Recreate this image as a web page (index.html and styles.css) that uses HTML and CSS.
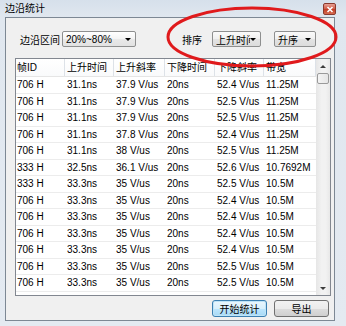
FILE: index.html
```html
<!DOCTYPE html>
<html>
<head>
<meta charset="utf-8">
<link rel="stylesheet" href="styles.css">
</head>
<body>
<div class="window">
  <div class="titlebar">
    <span class="title">边沿统计</span>
    <span class="close"><svg width="8" height="7" viewBox="0 0 8 7"><path d="M1.5 1 L6.5 6 M6.5 1 L1.5 6" stroke="#fff" stroke-width="1.6"/></svg></span>
  </div>
  <div class="client">
    <div class="controls">
      <span class="lbl lbl-range">边沿区间</span>
      <div class="combo combo-range"><span class="ctext">20%~80%</span><i class="arrow"></i></div>
      <span class="lbl lbl-sort">排序</span>
      <div class="combo combo-key"><span class="ctext">上升时间</span><i class="arrow"></i></div>
      <div class="combo combo-order"><span class="ctext">升序</span><i class="arrow"></i></div>
    </div>
    <div class="list">
      <div class="grid">
        <div class="head">
          <span>帧ID</span><span>上升时间</span><span>上升斜率</span><span>下降时间</span><span>下降斜率</span><span>带宽</span>
        </div>
        <div class="row"><span>706 H</span><span>31.1ns</span><span>37.9 V/us</span><span>20ns</span><span>52.4 V/us</span><span>11.25M</span></div>
        <div class="row"><span>706 H</span><span>31.1ns</span><span>37.9 V/us</span><span>20ns</span><span>52.5 V/us</span><span>11.25M</span></div>
        <div class="row"><span>706 H</span><span>31.1ns</span><span>37.9 V/us</span><span>20ns</span><span>52.5 V/us</span><span>11.25M</span></div>
        <div class="row"><span>706 H</span><span>31.1ns</span><span>37.8 V/us</span><span>20ns</span><span>52.4 V/us</span><span>11.25M</span></div>
        <div class="row"><span>706 H</span><span>31.1ns</span><span>38 V/us</span><span>20ns</span><span>52.5 V/us</span><span>11.25M</span></div>
        <div class="row"><span>333 H</span><span>32.5ns</span><span>36.1 V/us</span><span>20ns</span><span>52.6 V/us</span><span>10.7692M</span></div>
        <div class="row"><span>333 H</span><span>33.3ns</span><span>35 V/us</span><span>20ns</span><span>52.5 V/us</span><span>10.5M</span></div>
        <div class="row"><span>706 H</span><span>33.3ns</span><span>35 V/us</span><span>20ns</span><span>52.4 V/us</span><span>10.5M</span></div>
        <div class="row"><span>706 H</span><span>33.3ns</span><span>35 V/us</span><span>20ns</span><span>52.4 V/us</span><span>10.5M</span></div>
        <div class="row"><span>706 H</span><span>33.3ns</span><span>35 V/us</span><span>20ns</span><span>52.4 V/us</span><span>10.5M</span></div>
        <div class="row"><span>706 H</span><span>33.3ns</span><span>35 V/us</span><span>20ns</span><span>52.4 V/us</span><span>10.5M</span></div>
        <div class="row"><span>706 H</span><span>33.3ns</span><span>35 V/us</span><span>20ns</span><span>52.5 V/us</span><span>10.5M</span></div>
        <div class="row"><span>706 H</span><span>33.3ns</span><span>35 V/us</span><span>20ns</span><span>52.5 V/us</span><span>10.5M</span></div>
      </div>
      <div class="scroll">
        <div class="sbtn"><i class="up"></i></div>
        <div class="thumb"></div>
        <div class="track"></div>
        <div class="sbtn"><i class="down"></i></div>
      </div>
    </div>
    <div class="buttons">
      <button class="btn primary">开始统计</button>
      <button class="btn">导出</button>
    </div>
  </div>
  <svg class="mark" width="346" height="326" viewBox="0 0 346 326">
    <ellipse cx="252" cy="37" rx="84" ry="29" fill="none" stroke="#e01a1c" stroke-width="3"/>
  </svg>
</div>
</body>
</html>
```
FILE: styles.css
```css
* { box-sizing: border-box; }
html, body { margin: 0; padding: 0; }
body {
  font: 10px "Liberation Sans", "Noto Sans CJK SC", sans-serif;
  color: #000;
  background: #e2e8ef;
}
.window {
  position: relative;
  width: 346px;
  height: 326px;
  overflow: hidden;
  background: linear-gradient(180deg, #d6e0eb 0, #e0e7ef 17px, #e4eaf1 100%);
}
.titlebar {
  position: relative;
  height: 17px;
  display: flex;
  align-items: center;
  padding-left: 5px;
}
.title { font-size: 10px; line-height: 17px; }
.close {
  position: absolute;
  left: 323px;
  top: 3px;
  width: 13px;
  height: 12px;
  border: 1px solid #8a3a2e;
  border-radius: 2px;
  background: linear-gradient(#e8a195, #cf5a45 50%, #c23b24 51%, #d56a4f);
  display: flex;
  align-items: center;
  justify-content: center;
}
.client {
  margin-left: 5px;
  width: 330px;
  height: 304px;
  border: 1px solid #7d8894;
  background: #f0f0f0;
}
.controls {
  display: flex;
  align-items: center;
  height: 16px;
  margin-top: 13px;
}
.lbl { white-space: nowrap; }
.lbl-range { width: 42px; margin-left: 14px; }
.lbl-sort { width: 30px; margin-left: 46px; }
.combo {
  position: relative;
  height: 16px;
  border: 1px solid #8e8f8f;
  border-radius: 2px;
  background: linear-gradient(#fafafa, #f0f0f0 50%, #e3e3e3 51%, #dcdcdc);
  display: flex;
  align-items: center;
  padding-left: 3px;
  overflow: hidden;
}
.combo-range { width: 74px; background: linear-gradient(#ffffff, #f4f4f4 50%, #e9e9e9 51%, #e2e2e2); }
.combo-key { width: 49px; }
.combo-order { width: 42px; margin-left: 13px; }
.ctext { white-space: nowrap; }
.combo-key .ctext { width: 34px; overflow: hidden; }
.arrow {
  position: absolute;
  right: 4px;
  top: 6px;
  width: 0;
  height: 0;
  border-left: 3px solid transparent;
  border-right: 3px solid transparent;
  border-top: 3px solid #000;
}
.list {
  margin: 11px 0 0 9px;
  width: 316px;
  height: 238px;
  border: 1px solid #828790;
  background: #fff;
  display: flex;
}
.grid { width: 300px; overflow: hidden; }
.head, .row {
  display: grid;
  grid-template-columns: 49px 49px 51px 50px 49px 52px;
  white-space: nowrap;
}
.head {
  height: 18px;
  line-height: 18px;
  border-bottom: 1px solid #e5e5e5;
  background: linear-gradient(#ffffff, #f9fafb);
}
.head span { border-right: 1px solid #dde2e8; padding-left: 2px; overflow: hidden; }
.head span:first-child { padding-left: 1px; }
.row {
  height: 16.5px;
  line-height: 15.5px;
  border-bottom: 1px solid #ececec;
}
.row span { padding-left: 2px; overflow: hidden; }
.row span:first-child { padding-left: 1px; }
.scroll {
  width: 14px;
  display: flex;
  flex-direction: column;
  background: linear-gradient(90deg, #e6e6e6, #f2f2f2 40%, #f2f2f2 70%, #e8e8e8);
}
.sbtn {
  height: 14px;
  display: flex;
  align-items: center;
  justify-content: center;
}
.up, .down {
  width: 0; height: 0;
  border-left: 3px solid transparent;
  border-right: 3px solid transparent;
}
.up { border-bottom: 3px solid #3c3c3c; }
.down { border-top: 3px solid #3c3c3c; }
.thumb {
  height: 11px;
  margin: 0 1px;
  border: 1px solid #9a9a9a;
  border-radius: 2px;
  background: linear-gradient(90deg, #f4f4f4, #e6e6e6);
}
.track { flex: 1; }
.buttons {
  display: flex;
  justify-content: flex-end;
  gap: 7px;
  margin-top: 4px;
  padding-right: 5px;
}
.btn {
  width: 55px;
  height: 17px;
  padding: 0;
  font: inherit;
  color: #000;
  border: 1px solid #707070;
  border-radius: 3px;
  background: linear-gradient(#f2f2f2, #ebebeb 50%, #dddddd 51%, #cfcfcf);
}
.btn.primary {
  border-color: #3c7fb1;
  box-shadow: inset 0 0 0 1px #bfe4f7;
  background: linear-gradient(#eaf6fd, #d9f0fc 50%, #bee6fd 51%, #a7d9f5);
}
.mark {
  position: absolute;
  left: 0;
  top: 0;
  pointer-events: none;
}
```
